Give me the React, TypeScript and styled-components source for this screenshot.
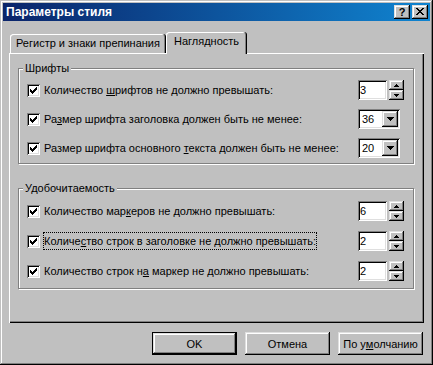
import React from "react";
import styled, { createGlobalStyle } from "styled-components";

const GlobalStyle = createGlobalStyle`
  html, body {
    margin: 0;
    padding: 0;
    background: #c0c0c0;
  }
  body {
    font-family: "Liberation Sans", Arial, sans-serif;
    font-size: 11px;
    color: #000;
  }
`;

type Control = { kind: "spin" | "combo"; value: string };
type Option = { label: React.ReactNode; control: Control; focused?: boolean };

const fonts: Option[] = [
  {
    label: (
      <>
        Количество <u>ш</u>рифтов не должно превышать:
      </>
    ),
    control: { kind: "spin", value: "3" },
  },
  {
    label: (
      <>
        Ра<u>з</u>мер шрифта заголовка должен быть не менее:
      </>
    ),
    control: { kind: "combo", value: "36" },
  },
  {
    label: (
      <>
        Размер шрифта основного <u>т</u>екста должен быть не менее:
      </>
    ),
    control: { kind: "combo", value: "20" },
  },
];

const readability: Option[] = [
  {
    label: (
      <>
        Количество мар<u>к</u>еров не должно превышать:
      </>
    ),
    control: { kind: "spin", value: "6" },
  },
  {
    label: (
      <>
        Количе<u>с</u>тво строк в заголовке не должно превышать:
      </>
    ),
    control: { kind: "spin", value: "2" },
    focused: true,
  },
  {
    label: (
      <>
        Количество строк н<u>а</u> маркер не должно превышать:
      </>
    ),
    control: { kind: "spin", value: "2" },
  },
];

const UpArrow = () => (
  <svg width="5" height="3" viewBox="0 0 5 3" shapeRendering="crispEdges">
    <path d="M2 0h1v1h1v1h1v1H0V2h1V1h1z" fill="#000" />
  </svg>
);

const DownArrow = () => (
  <svg width="5" height="3" viewBox="0 0 5 3" shapeRendering="crispEdges">
    <path d="M0 0h5v1H4v1H3v1H2V2H1V1H0z" fill="#000" />
  </svg>
);

const ComboArrow = () => (
  <svg width="7" height="4" viewBox="0 0 7 4" shapeRendering="crispEdges">
    <path d="M0 0h7v1H6v1H5v1H4v1H3V3H2V2H1V1H0z" fill="#000" />
  </svg>
);

const CheckMark = () => (
  <svg width="7" height="7" viewBox="0 0 7 7" shapeRendering="crispEdges">
    <path
      d="M6 0h1v1H6z M5 1h2v1H5z M0 2h1v1H0z M4 2h3v1H4z M0 3h2v1H0z M3 3h3v1H3z M0 4h5v1H0z M1 5h3v1H1z M2 6h1v1H2z"
      fill="#000"
    />
  </svg>
);

const CloseGlyph = () => (
  <svg width="8" height="7" viewBox="0 0 8 7" shapeRendering="crispEdges">
    <path
      d="M0 0h2v1H0z M6 0h2v1H6z M1 1h2v1H1z M5 1h2v1H5z M2 2h4v1H2z M3 3h2v1H3z M2 4h4v1H2z M1 5h2v1H1z M5 5h2v1H5z M0 6h2v1H0z M6 6h2v1H6z"
      fill="#000"
    />
  </svg>
);

const OptionRow = ({ option }: { option: Option }) => (
  <StyledRow>
    <StyledCheckbox>
      <CheckMark />
    </StyledCheckbox>
    <StyledLabel $focused={option.focused}>{option.label}</StyledLabel>
    <StyledControl>
      {option.control.kind === "spin" ? (
        <>
          <StyledEdit>{option.control.value}</StyledEdit>
          <StyledSpin>
            <StyledSpinButton>
              <UpArrow />
            </StyledSpinButton>
            <StyledSpinButton>
              <DownArrow />
            </StyledSpinButton>
          </StyledSpin>
        </>
      ) : (
        <StyledCombo>
          <StyledComboText>{option.control.value}</StyledComboText>
          <StyledComboButton>
            <ComboArrow />
          </StyledComboButton>
        </StyledCombo>
      )}
    </StyledControl>
  </StyledRow>
);

const App = () => {
  return (
    <>
      <GlobalStyle />
      <StyledWindow>
        <StyledTitleBar>
          <StyledTitleText>Параметры стиля</StyledTitleText>
          <StyledTitleButton>?</StyledTitleButton>
          <StyledTitleButton>
            <CloseGlyph />
          </StyledTitleButton>
        </StyledTitleBar>
        <StyledBody>
          <StyledTabRow>
            <StyledTab $width={156}>Регистр и знаки препинания</StyledTab>
            <StyledTab $width={81} $active>
              Наглядность
            </StyledTab>
          </StyledTabRow>
          <StyledPanel>
            <StyledGroup $top={11} $bottom={5} $gap={9}>
              <StyledLegend>Шрифты</StyledLegend>
              {fonts.map((o, i) => (
                <OptionRow key={i} option={o} />
              ))}
            </StyledGroup>
            <StyledGroup $top={12} $bottom={7} $gap={10}>
              <StyledLegend>Удобочитаемость</StyledLegend>
              {readability.map((o, i) => (
                <OptionRow key={i} option={o} />
              ))}
            </StyledGroup>
          </StyledPanel>
          <StyledButtonRow>
            <StyledButton $default>OK</StyledButton>
            <StyledButton>Отмена</StyledButton>
            <StyledButton>
              По у<u>м</u>олчанию
            </StyledButton>
          </StyledButtonRow>
        </StyledBody>
      </StyledWindow>
    </>
  );
};

const raised = `
  box-shadow: inset -1px -1px #000, inset 1px 1px #dfdfdf,
    inset -2px -2px #808080, inset 2px 2px #fff;
`;

const sunken = `
  box-shadow: inset 1px 1px #808080, inset -1px -1px #fff,
    inset 2px 2px #000, inset -2px -2px #dfdfdf;
`;

const StyledWindow = styled.div`
  width: 433px;
  height: 365px;
  box-sizing: border-box;
  padding: 3px;
  background: #c0c0c0;
  box-shadow: inset -1px -1px #000, inset 1px 1px #c0c0c0,
    inset -2px -2px #808080, inset 2px 2px #fff;
  display: flex;
  flex-direction: column;
`;

const StyledTitleBar = styled.div`
  height: 18px;
  display: flex;
  align-items: center;
  padding: 0 2px 0 3px;
  background: linear-gradient(to right, #0a246a, #1084d0);
  color: #fff;
  font-weight: bold;
  font-size: 12px;
`;

const StyledTitleText = styled.span`
  flex: 1;
`;

const StyledTitleButton = styled.div`
  width: 16px;
  height: 14px;
  box-sizing: border-box;
  background: #c0c0c0;
  ${raised}
  display: flex;
  align-items: center;
  justify-content: center;
  color: #000;
  font-weight: bold;
  font-size: 11px;
  line-height: 14px;
  padding-bottom: 1px;
  & + & {
    margin-left: 2px;
  }
`;

const StyledBody = styled.div`
  padding: 11px 6px 0;
  display: flex;
  flex-direction: column;
`;

const StyledTabRow = styled.div`
  display: flex;
  align-items: flex-end;
  height: 21px;
  padding-left: 1px;
  position: relative;
  z-index: 1;
`;

const StyledTab = styled.div<{ $width: number; $active?: boolean }>`
  width: ${({ $width }) => $width}px;
  height: ${({ $active }) => ($active ? 22 : 19)}px;
  margin-bottom: ${({ $active }) => ($active ? -1 : 0)}px;
  box-sizing: border-box;
  background: #c0c0c0;
  border-radius: 3px 3px 0 0;
  box-shadow: inset -1px 0 #000, inset 1px 1px #fff, inset -2px 0 #808080;
  padding-top: 3px;
  line-height: 13px;
  text-align: center;
  white-space: nowrap;
`;

const StyledPanel = styled.div`
  height: 270px;
  box-sizing: border-box;
  padding: 15px 10px 0 9px;
  box-shadow: inset 1px 1px #fff, inset -1px -1px #000,
    inset -2px -2px #808080;
`;

const StyledGroup = styled.div<{ $top: number; $bottom: number; $gap: number }>`
  position: relative;
  border: 1px solid #808080;
  box-shadow: 1px 1px #fff, inset 1px 1px #fff;
  padding: ${({ $top }) => $top}px 9px ${({ $bottom }) => $bottom}px 8px;
  display: flex;
  flex-direction: column;
  gap: ${({ $gap }) => $gap}px;
  & + & {
    margin-top: 24px;
  }
`;

const StyledLegend = styled.span`
  position: absolute;
  top: -7px;
  left: 4px;
  padding: 0 2px;
  background: #c0c0c0;
  line-height: 13px;
`;

const StyledRow = styled.div`
  height: 20px;
  display: flex;
  align-items: center;
`;

const StyledCheckbox = styled.div`
  width: 13px;
  height: 13px;
  flex: none;
  box-sizing: border-box;
  background: #fff;
  ${sunken}
  display: flex;
  align-items: center;
  justify-content: center;
  margin-right: 3px;
`;

const StyledLabel = styled.span<{ $focused?: boolean }>`
  display: inline-block;
  line-height: 18px;
  white-space: nowrap;
  padding: 0 1px;
  margin-right: auto;
  outline: ${({ $focused }) => ($focused ? "1px dotted #000" : "none")};
  outline-offset: -1px;
`;

const StyledControl = styled.div`
  width: 46px;
  display: flex;
  align-items: center;
`;

const StyledEdit = styled.div`
  width: 29px;
  height: 20px;
  box-sizing: border-box;
  background: #fff;
  ${sunken}
  padding-left: 2px;
  line-height: 20px;
`;

const StyledSpin = styled.div`
  width: 15px;
  height: 20px;
  margin-left: 2px;
  display: flex;
  flex-direction: column;
`;

const StyledSpinButton = styled.div`
  flex: 1;
  background: #c0c0c0;
  ${raised}
  display: flex;
  align-items: center;
  justify-content: center;
`;

const StyledCombo = styled.div`
  width: 42px;
  height: 20px;
  box-sizing: border-box;
  padding: 2px;
  background: #fff;
  ${sunken}
  display: flex;
`;

const StyledComboText = styled.div`
  flex: 1;
  padding-left: 2px;
  line-height: 16px;
`;

const StyledComboButton = styled.div`
  width: 16px;
  height: 16px;
  background: #c0c0c0;
  ${raised}
  display: flex;
  align-items: center;
  justify-content: center;
`;

const StyledButtonRow = styled.div`
  display: flex;
  justify-content: flex-end;
  gap: 8px;
  margin-top: 9px;
  padding-right: 1px;
`;

const StyledButton = styled.div<{ $default?: boolean }>`
  width: 85px;
  height: 23px;
  box-sizing: border-box;
  border: ${({ $default }) => ($default ? "1px solid #000" : "none")};
  ${raised}
  display: flex;
  align-items: center;
  justify-content: center;
  white-space: nowrap;
`;

export default App;
